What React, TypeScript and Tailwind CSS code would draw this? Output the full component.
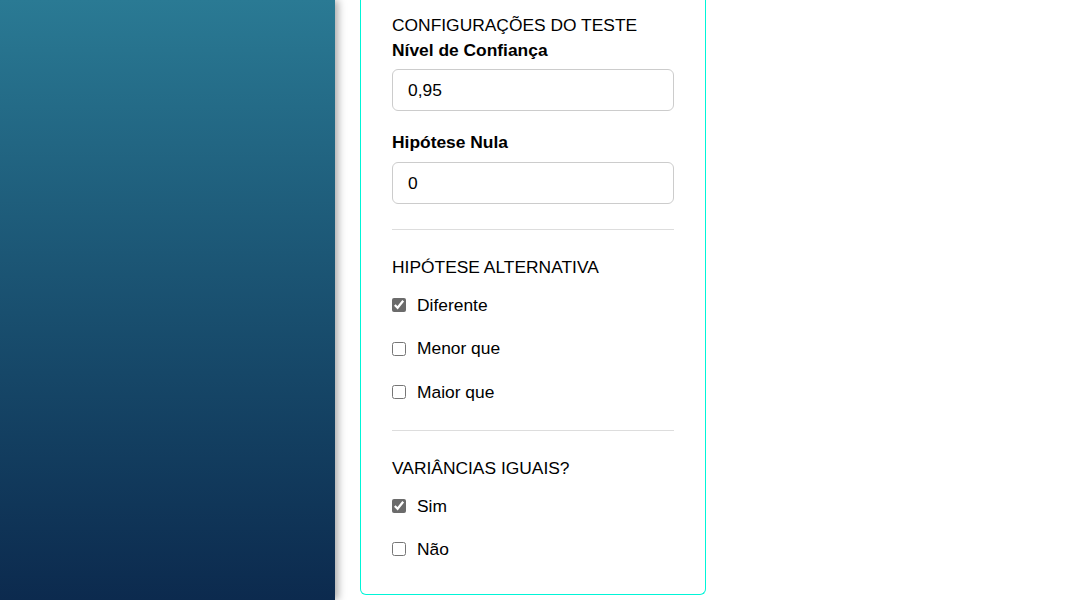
import { useState } from "react";

function Option({ label, checked, onChange }: { label: string; checked: boolean; onChange: () => void }) {
  return (
    <label className="flex items-center h-6 gap-[11px] cursor-pointer">
      <input
        type="checkbox"
        checked={checked}
        onChange={onChange}
        className="m-0 w-[14px] h-[14px] accent-[#6b6b6b]"
      />
      <span>{label}</span>
    </label>
  );
}

export default function App() {
  const [alt, setAlt] = useState("diferente");
  const [eqVar, setEqVar] = useState("sim");
  const [conf, setConf] = useState("0,95");
  const [h0, setH0] = useState("0");

  return (
    <div
      className="flex min-h-screen bg-white text-[17.4px] text-black"
      style={{ fontFamily: '"Liberation Sans", Arial, sans-serif' }}
    >
      {/* sidebar */}
      <aside className="w-[335px] h-[600px] shrink-0 bg-gradient-to-b from-[#2a7a94] to-[#0c2a4e] shadow-[3px_0_8px_rgba(0,0,0,0.35)]" />

      {/* painel de configurações */}
      <div className="ml-[25px] w-[346px] self-start border border-t-0 border-[#00f5d8] rounded-b-md px-[31px] pt-[13px] pb-[33px]">
        <h3 className="leading-6 font-normal">CONFIGURAÇÕES DO TESTE</h3>
        <p className="leading-6 font-bold mt-px">Nível de Confiança</p>
        <input
          value={conf}
          onChange={(e) => setConf(e.target.value)}
          className="mt-[7px] w-full h-[42px] px-[15px] border border-[#cccccc] rounded-md outline-none"
        />
        <p className="leading-6 font-bold mt-[19px]">Hipótese Nula</p>
        <input
          value={h0}
          onChange={(e) => setH0(e.target.value)}
          className="mt-[8px] w-full h-[42px] px-[15px] border border-[#cccccc] rounded-md outline-none"
        />

        <hr className="mt-[25px] border-0 border-t border-[#dddddd]" />

        <h3 className="leading-6 font-normal mt-[25px]">HIPÓTESE ALTERNATIVA</h3>
        <div className="mt-[14px] flex flex-col gap-[19.5px]">
          <Option label="Diferente" checked={alt === "diferente"} onChange={() => setAlt("diferente")} />
          <Option label="Menor que" checked={alt === "menor"} onChange={() => setAlt("menor")} />
          <Option label="Maior que" checked={alt === "maior"} onChange={() => setAlt("maior")} />
        </div>

        <hr className="mt-[26px] border-0 border-t border-[#dddddd]" />

        <h3 className="leading-6 font-normal mt-[25px]">VARIÂNCIAS IGUAIS?</h3>
        <div className="mt-[14px] flex flex-col gap-[19px]">
          <Option label="Sim" checked={eqVar === "sim"} onChange={() => setEqVar("sim")} />
          <Option label="Não" checked={eqVar === "nao"} onChange={() => setEqVar("nao")} />
        </div>
      </div>
    </div>
  );
}
